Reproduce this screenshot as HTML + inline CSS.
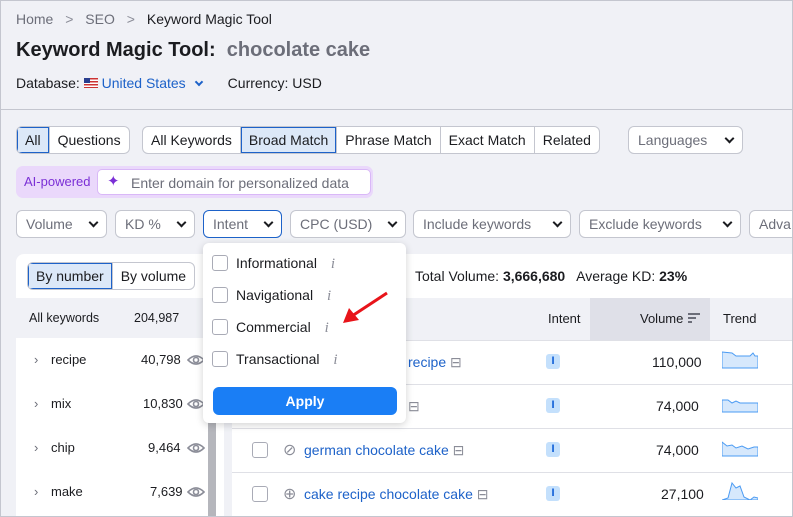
<!DOCTYPE html>
<html style="width:793px;height:517px;overflow:hidden"><head><meta charset="utf-8"><style>
*{box-sizing:border-box;margin:0;padding:0}
body{width:793px;height:517px;overflow:hidden;background:#f0f1f6;font-family:"Liberation Sans",sans-serif;font-size:14px;color:#1b1c20;position:relative}
.a{position:absolute;white-space:nowrap}
.frame{position:absolute;left:0;top:0;width:793px;height:517px;border:1px solid #c4c6cf;pointer-events:none;z-index:50}
.btn{position:absolute;height:28px;border:1px solid #c4c6cf;background:#fff;border-radius:6px;display:flex;align-items:center;padding:0 9px;color:#6c6e79}
.seg{position:absolute;height:28px;display:flex;border:1px solid #c4c6cf;border-radius:6px;background:#fff;overflow:hidden}
.seg div{padding:0 8px;display:flex;align-items:center;border-left:1px solid #c4c6cf;color:#1b1c20}
.seg div:first-child{border-left:none}
.seg .on{background:#dce8f8;box-shadow:inset 0 0 0 1px #1d62c9}
.chev{display:inline-block;width:7px;height:7px;border-right:2px solid #1b1c20;border-bottom:2px solid #1b1c20;transform:rotate(45deg);margin-left:auto;margin-top:-4px}
.cb{position:absolute;width:16px;height:16px;border:1px solid #a9abb6;border-radius:3px;background:#fff}
.info{color:#8b8d98;font-family:"Liberation Serif",serif;font-style:italic;font-size:15px}
.link{color:#1d62c9}
.badge{position:absolute;width:14px;height:15px;background:#c4e0fc;border-radius:3px;color:#0b5bd6;font-size:11px;font-weight:bold;text-align:center;line-height:15px}
.row{position:absolute;left:232px;width:561px;height:44px;border-top:1px solid #dfe0e6;background:#fff}
</style></head><body>
<div class="frame"></div>
<div class="a" style="left:16px;top:11px;color:#6c6e79">Home <span style="margin:0 8px;color:#8b8d98">&gt;</span> SEO <span style="margin:0 8px;color:#8b8d98">&gt;</span> <span style="color:#1b1c20">Keyword Magic Tool</span></div>
<div class="a" style="left:16px;top:39px;font-size:20px;font-weight:bold">Keyword Magic Tool:&nbsp; <span style="color:#6c6e79">chocolate cake</span></div>
<div class="a" style="left:16px;top:75px">Database: <span style="display:inline-block;width:14px;height:10px;background:repeating-linear-gradient(#c33 0 1.5px,#fff 1.5px 3px);position:relative;vertical-align:0"><span style="position:absolute;left:0;top:0;width:6px;height:5px;background:#2b3f8f"></span></span> <span class="link">United States</span><span style="display:inline-block;width:6px;height:6px;border-right:2px solid #1d62c9;border-bottom:2px solid #1d62c9;transform:rotate(45deg);margin-left:10px;vertical-align:3px"></span><span style="margin-left:26px">Currency: USD</span></div>
<div class="a" style="left:0;top:109px;width:793px;height:1px;background:#c4c6cf"></div>

<div class="seg" style="left:16px;top:126px"><div class="on">All</div><div>Questions</div></div>
<div class="seg" style="left:142px;top:126px"><div>All Keywords</div><div class="on">Broad Match</div><div>Phrase Match</div><div>Exact Match</div><div>Related</div></div>
<div class="btn" style="left:628px;top:126px;width:115px">Languages<span class="chev"></span></div>

<div class="a" style="left:16px;top:166px;width:357px;height:32px;background:#ead8fb;border-radius:7px"></div>
<div class="a" style="left:24px;top:174px;color:#7b2fd6;font-size:13px">AI-powered</div>
<div class="a" style="left:97px;top:169px;width:274px;height:26px;background:#fff;border:1px solid #d9b8f7;border-radius:5px;color:#6c6e79;padding:5px 0 0 33px">Enter domain for personalized data<span style="position:absolute;left:9px;top:2px;color:#7b2fd6;font-size:15px">✦</span></div>

<div class="btn" style="left:16px;top:210px;width:91px">Volume<span class="chev"></span></div>
<div class="btn" style="left:115px;top:210px;width:80px">KD %<span class="chev"></span></div>
<div class="btn" style="left:203px;top:210px;width:79px;border-color:#1d62c9">Intent<span class="chev"></span></div>
<div class="btn" style="left:290px;top:210px;width:116px">CPC (USD)<span class="chev"></span></div>
<div class="btn" style="left:413px;top:210px;width:158px">Include keywords<span class="chev"></span></div>
<div class="btn" style="left:579px;top:210px;width:162px">Exclude keywords<span class="chev"></span></div>
<div class="btn" style="left:749px;top:210px;width:80px">Adva</div>

<!-- left card -->
<div class="a" style="left:16px;top:254px;width:208px;height:263px;background:#fff;border-radius:8px 0 0 0"></div>
<div class="seg" style="left:27px;top:262px;height:28px"><div class="on">By number</div><div>By volume</div></div>
<div class="a" style="left:16px;top:298px;width:200px;height:40px;background:#f0f1f6"></div>
<div class="a" style="left:29px;top:311px;font-size:12.5px">All keywords</div>
<div class="a" style="left:134px;top:311px;font-size:12.5px">204,987</div>
<div class="a" style="left:208px;top:338px;width:8px;height:179px;background:#b5b6bc"></div>
<div class="a" style="left:34px;top:352px;font-size:13px;color:#6c6e79">›</div><div class="a" style="left:51px;top:352px;font-size:13px">recipe</div><div class="a" style="left:141px;top:352px;font-size:13px">40,798</div>
<div class="a" style="left:34px;top:396px;font-size:13px;color:#6c6e79">›</div><div class="a" style="left:51px;top:396px;font-size:13px">mix</div><div class="a" style="left:143px;top:396px;font-size:13px">10,830</div>
<div class="a" style="left:34px;top:440px;font-size:13px;color:#6c6e79">›</div><div class="a" style="left:51px;top:440px;font-size:13px">chip</div><div class="a" style="left:148px;top:440px;font-size:13px">9,464</div>
<div class="a" style="left:34px;top:484px;font-size:13px;color:#6c6e79">›</div><div class="a" style="left:51px;top:484px;font-size:13px">make</div><div class="a" style="left:150px;top:484px;font-size:13px">7,639</div>
<svg class="a" style="left:187px;top:353px" width="18" height="150" fill="none" stroke="#8b8d98" stroke-width="1.6"><g><path d="M1 7 Q9 -1 17 7 Q9 15 1 7Z"/><circle cx="9" cy="7" r="2.5"/></g><g transform="translate(0,44)"><path d="M1 7 Q9 -1 17 7 Q9 15 1 7Z"/><circle cx="9" cy="7" r="2.5"/></g><g transform="translate(0,88)"><path d="M1 7 Q9 -1 17 7 Q9 15 1 7Z"/><circle cx="9" cy="7" r="2.5"/></g><g transform="translate(0,132)"><path d="M1 7 Q9 -1 17 7 Q9 15 1 7Z"/><circle cx="9" cy="7" r="2.5"/></g></svg>

<!-- table card -->
<div class="a" style="left:232px;top:254px;width:561px;height:44px;background:#fff;border-radius:8px 0 0 0"></div>
<div class="a" style="left:415px;top:268px">Total Volume: <b>3,666,680</b>&nbsp;&nbsp; Average KD: <b>23%</b></div>
<div class="a" style="left:232px;top:298px;width:561px;height:42px;background:#f0f1f6"></div>
<div class="a" style="left:590px;top:298px;width:120px;height:42px;background:#dfe0e8"></div>
<div class="a" style="left:548px;top:311px;font-size:13px">Intent</div>
<div class="a" style="left:640px;top:311px;font-size:13px">Volume</div>
<svg class="a" style="left:688px;top:313px" width="12" height="10" fill="#6c6e79"><rect x="0" y="0" width="12" height="2"/><rect x="0" y="4" width="8" height="2"/><rect x="0" y="8" width="4" height="2"/></svg>
<div class="a" style="left:723px;top:311px;font-size:13px">Trend</div>

<div class="row" style="top:340px"></div><div class="row" style="top:384px"></div><div class="row" style="top:428px"></div><div class="row" style="top:472px"></div>
<div class="a link" style="left:408px;top:354px">recipe <span style="color:#8b8d98">⊟</span></div>
<div class="a" style="left:408px;top:398px;color:#8b8d98">⊟</div>
<div class="cb" style="left:252px;top:442px"></div><div class="cb" style="left:252px;top:486px"></div>
<div class="a" style="left:283px;top:440px;color:#8b8d98;font-size:16px">⊘</div>
<div class="a link" style="left:304px;top:442px">german chocolate cake <span style="color:#8b8d98">⊟</span></div>
<div class="a" style="left:283px;top:484px;color:#8b8d98;font-size:16px">⊕</div>
<div class="a link" style="left:304px;top:486px">cake recipe chocolate cake <span style="color:#8b8d98">⊟</span></div>
<div class="badge" style="left:546px;top:354px">I</div><div class="badge" style="left:546px;top:398px">I</div><div class="badge" style="left:546px;top:442px">I</div><div class="badge" style="left:546px;top:486px">I</div>
<div class="a" style="left:652px;top:354px">110,000</div><div class="a" style="left:656px;top:398px">74,000</div><div class="a" style="left:656px;top:442px">74,000</div><div class="a" style="left:661px;top:486px">27,100</div>
<svg class="a" style="left:722px;top:350px" width="36" height="150"><g fill="#d6e8fc" stroke="#4b9bf3" stroke-width="1"><path d="M0 2 L10 3 L14 6 L28 6 L31 3 L33 6 L36 6 L36 18 L0 18Z"/><path d="M0 50 L6 50 L10 53 L14 51 L18 53 L36 53 L36 62 L0 62Z"/><path d="M0 92 L5 96 L10 95 L14 98 L20 96 L26 99 L32 97 L36 97 L36 106 L0 106Z"/><path d="M0 150 L6 148 L10 133 L14 138 L18 136 L22 147 L28 150 L32 147 L36 148 L36 150 Z"/></g></svg>

<!-- dropdown -->
<div class="a" style="left:203px;top:243px;width:203px;height:180px;background:#fff;border-radius:6px;box-shadow:0 2px 8px rgba(0,0,0,.18);z-index:10">
<div class="cb" style="left:9px;top:12px"></div><div class="a" style="left:33px;top:12px">Informational <span class="info" style="margin-left:10px">i</span></div>
<div class="cb" style="left:9px;top:44px"></div><div class="a" style="left:33px;top:44px">Navigational <span class="info" style="margin-left:10px">i</span></div>
<div class="cb" style="left:9px;top:76px"></div><div class="a" style="left:33px;top:76px">Commercial <span class="info" style="margin-left:10px">i</span></div>
<div class="cb" style="left:9px;top:108px"></div><div class="a" style="left:33px;top:108px">Transactional <span class="info" style="margin-left:10px">i</span></div>
<div class="a" style="left:10px;top:144px;width:184px;height:28px;background:#1a7ef5;border-radius:6px;color:#fff;font-weight:bold;text-align:center;line-height:28px">Apply</div>
</div>
<svg class="a" style="left:340px;top:290px;z-index:11" width="50" height="36"><line x1="47" y1="3" x2="12" y2="26" stroke="#e8141a" stroke-width="3"/><path d="M3 33 L9 18 L19 30Z" fill="#e8141a"/></svg>
</body></html>
